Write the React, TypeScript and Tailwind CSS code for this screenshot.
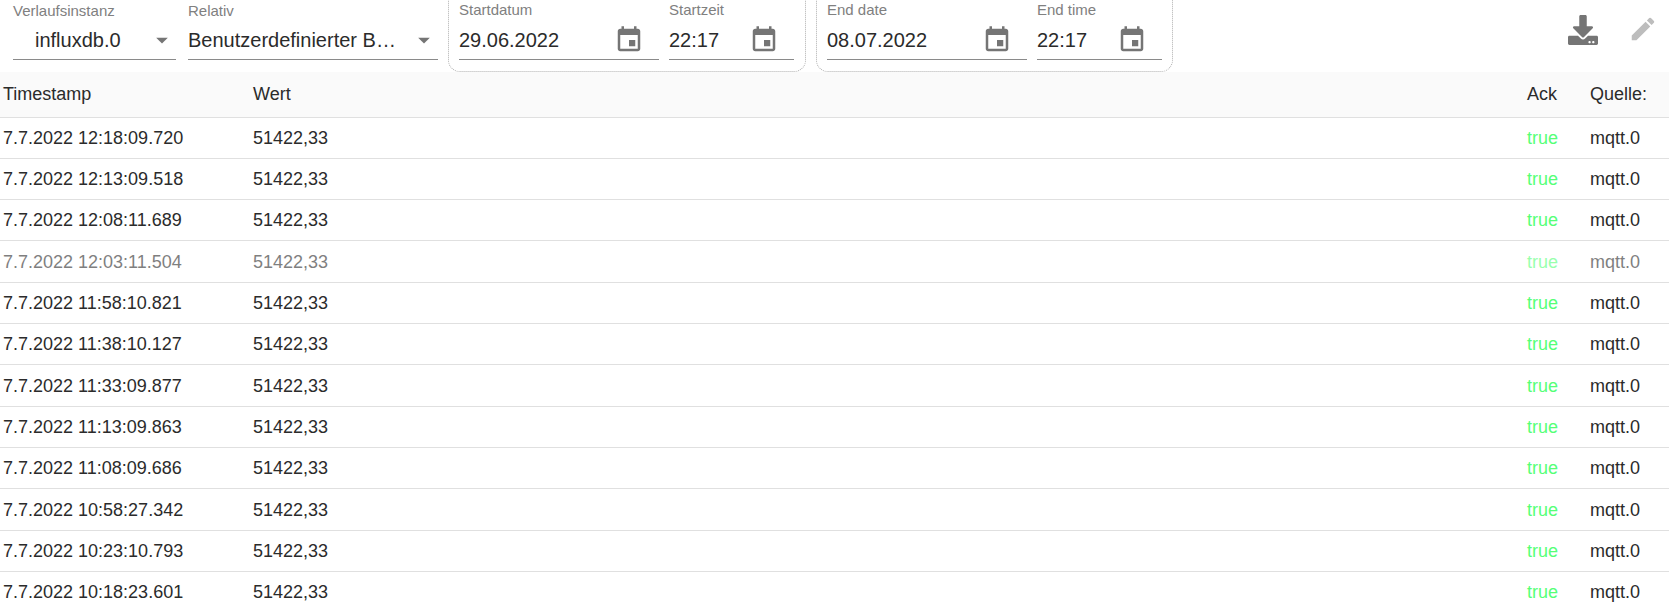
import { FaDownload } from "react-icons/fa";

const EVENT_PATH =
  "M17 12h-5v5h5v-5zM16 1v2H8V1H6v2H5c-1.11 0-1.99.9-1.99 2L3 19c0 1.1.89 2 2 2h14c1.1 0 2-.9 2-2V5c0-1.1-.9-2-2-2h-1V1h-2zm3 18H5V8h14v11z";
const EDIT_PATH =
  "M3 17.25V21h3.75L17.81 9.94l-3.75-3.75L3 17.25zM20.71 7.04c.39-.39.39-1.02 0-1.41l-2.34-2.34a.9959.9959 0 0 0-1.41 0l-1.83 1.83 3.75 3.75 1.83-1.83z";

const rows = [
  "7.7.2022 12:18:09.720",
  "7.7.2022 12:13:09.518",
  "7.7.2022 12:08:11.689",
  "7.7.2022 12:03:11.504",
  "7.7.2022 11:58:10.821",
  "7.7.2022 11:38:10.127",
  "7.7.2022 11:33:09.877",
  "7.7.2022 11:13:09.863",
  "7.7.2022 11:08:09.686",
  "7.7.2022 10:58:27.342",
  "7.7.2022 10:23:10.793",
  "7.7.2022 10:18:23.601",
];

const Select = ({ label, value, width, center }: { label: string; value: string; width: string; center?: boolean }) => (
  <div className={`${width} shrink-0`}>
    <div className="h-[27px] pt-[3px] text-[15px] leading-[16px] text-[#808080]">{label}</div>
    <div className="flex h-[33px] items-center border-b border-[#8a8a8a] pb-[7px]">
      <span className={`min-w-0 flex-1 truncate text-[20px] leading-[26px] text-[#2b2b2b] ${center ? "pl-[22px]" : ""}`}>{value}</span>
      <svg viewBox="0 0 24 24" className="ml-[10px] h-[28px] w-[28px] shrink-0 fill-[#757575]">
        <path d="M7 10l5 5 5-5z" />
      </svg>
    </div>
  </div>
);

const DateField = ({ label, value, width }: { label: string; value: string; width: string }) => (
  <div className={`${width} shrink-0`}>
    <div className="h-[27px] pt-[3px] text-[15px] leading-[16px] text-[#808080]">{label}</div>
    <div className="flex h-[34px] items-center justify-between border-b border-[#8a8a8a] pb-[6px]">
      <span className="text-[20px] leading-[26px] text-[#2b2b2b]">{value}</span>
      <svg viewBox="0 0 24 24" className="mr-[15px] h-[30px] w-[30px] fill-[#757575]">
        <path d={EVENT_PATH} />
      </svg>
    </div>
  </div>
);

const RangeBox = ({ dateLabel, timeLabel, date, width }: { dateLabel: string; timeLabel: string; date: string; width: string }) => (
  <div className={`${width} -mt-[12px] ml-[10px] flex h-[84px] shrink-0 gap-[10px] rounded-[12px] border border-dotted border-[#b0b0b0] pl-[10px] pt-[10px]`}>
    <DateField label={dateLabel} value={date} width="w-[200px]" />
    <DateField label={timeLabel} value="22:17" width="w-[125px]" />
  </div>
);

export default function App() {
  return (
    <div className="h-[606px] overflow-hidden bg-white font-['Liberation_Sans',sans-serif]">
      <div className="flex h-[72px]">
        <Select label="Verlaufsinstanz" value="influxdb.0" width="ml-[13px] w-[163px]" center />
        <Select label="Relativ" value="Benutzerdefinierter Bereich" width="ml-[12px] w-[250px]" />
        <RangeBox dateLabel="Startdatum" timeLabel="Startzeit" date="29.06.2022" width="w-[358px]" />
        <RangeBox dateLabel="End date" timeLabel="End time" date="08.07.2022" width="w-[357px]" />
        <div className="ml-auto flex items-start pr-[11px] pt-[15px]">
          <FaDownload className="h-[30px] w-[32px] text-[#757575]" />
          <svg viewBox="0 0 24 24" className="ml-[29px] -mt-[1px] h-[30px] w-[30px] fill-[#bdbdbd]">
            <path d={EDIT_PATH} />
          </svg>
        </div>
      </div>
      <table className="w-full table-fixed border-collapse text-[18px] text-[#2b2b2b]">
        <thead>
          <tr className="h-[45px] border-b border-[#e0e0e0] bg-[#fafafa] text-left">
            <th className="w-[250px] pl-[3px] font-normal">Timestamp</th>
            <th className="pl-[3px] font-normal">Wert</th>
            <th className="w-[63px] pl-[3px] font-normal">Ack</th>
            <th className="w-[82px] pl-[3px] font-normal">Quelle:</th>
          </tr>
        </thead>
        <tbody>
          {rows.map((ts, i) => (
            <tr key={ts} className={`h-[41.33px] border-b border-[#e0e0e0] ${i === 3 ? "opacity-60" : ""}`}>
              <td className="pl-[3px] pt-[1px]">{ts}</td>
              <td className="pl-[3px] pt-[1px]">51422,33</td>
              <td className="pl-[3px] pt-[1px] text-[#55ff77]">true</td>
              <td className="pl-[3px] pt-[1px]">mqtt.0</td>
            </tr>
          ))}
        </tbody>
      </table>
    </div>
  );
}
